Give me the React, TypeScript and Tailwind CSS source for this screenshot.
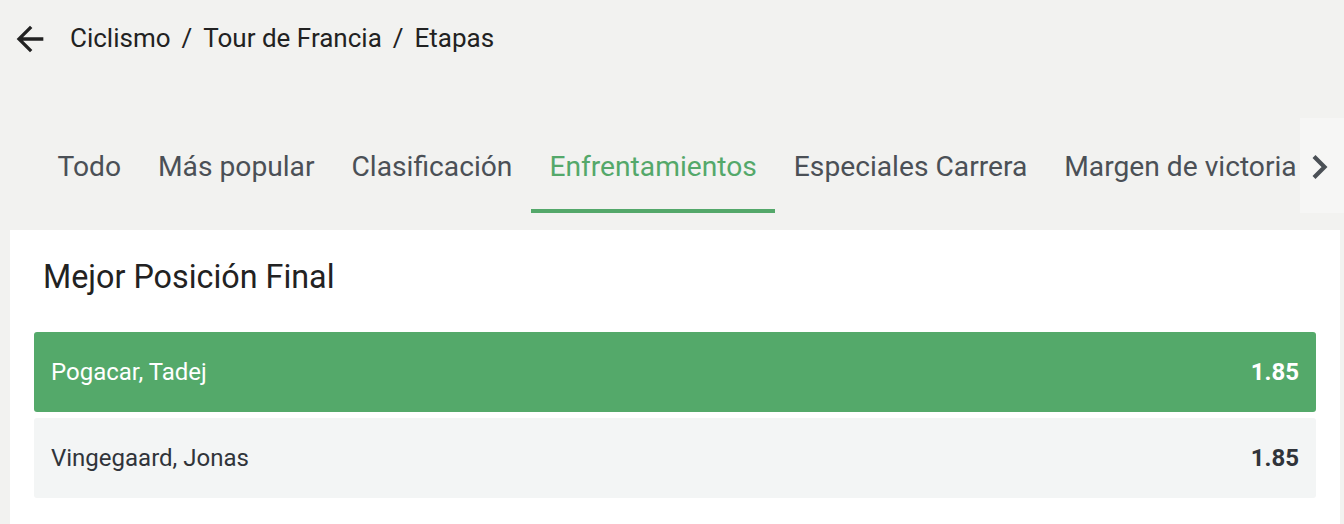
const tabs = [
  "Todo",
  "Más popular",
  "Clasificación",
  "Enfrentamientos",
  "Especiales Carrera",
  "Margen de victoria",
];

const rows = [
  { name: "Pogacar, Tadej", odds: "1.85", selected: true },
  { name: "Vingegaard, Jonas", odds: "1.85", selected: false },
];

export default function App() {
  return (
    <div
      className="min-h-[524px] bg-[#f2f2f0] text-[#222]"
      style={{ fontFamily: "Roboto, 'Liberation Sans', sans-serif" }}
    >
      {/* header */}
      <div className="flex h-[76px] items-center pl-[10px]">
        <svg width="40" height="40" viewBox="0 0 24 24" className="mt-[1px] flex-none">
          <path
            d="M20 11H7.83l5.59-5.59L12 4l-8 8 8 8 1.41-1.41L7.83 13H20v-2z"
            fill="#222"
          />
        </svg>
        <div className="ml-[20px] flex items-center gap-[11px] text-[26px]">
          <span>Ciclismo</span>
          <span>/</span>
          <span>Tour de Francia</span>
          <span>/</span>
          <span>Etapas</span>
        </div>
      </div>

      {/* tabs */}
      <div className="mt-[42px] flex h-[95px]">
        <div className="flex flex-1 overflow-hidden pl-[39px]">
          {tabs.map((tab) => (
            <div
              key={tab}
              className={
                tab === "Enfrentamientos"
                  ? "flex flex-none items-center border-b-4 border-[#54a86a] px-[18.5px] pt-[8px] text-[28.2px] whitespace-nowrap text-[#54a86a]"
                  : "flex flex-none items-center border-b-4 border-transparent px-[18.5px] pt-[8px] text-[28.2px] whitespace-nowrap text-[#4b5056]"
              }
            >
              {tab}
            </div>
          ))}
        </div>
        <div className="flex w-[44px] flex-none items-center bg-[#f6f6f5] pl-[10px] pt-[2px]">
          <svg width="20" height="26" viewBox="0 0 20 26">
            <polyline
              points="4,2.5 14.5,13 4,23.5"
              fill="none"
              stroke="#4b5056"
              strokeWidth="4.2"
            />
          </svg>
        </div>
      </div>

      {/* card */}
      <div className="mt-[17px] ml-[10px] mr-[4px] bg-white px-[24px] pt-[29px] pb-[26px]">
        <div className="pl-[9px] text-[32.3px] leading-[36px] text-[#222]">
          Mejor Posición Final
        </div>
        <div className="mt-[37px] flex flex-col gap-[6px]">
          {rows.map((row) => (
            <div
              key={row.name}
              className={
                row.selected
                  ? "flex h-[80px] items-center justify-between rounded-[3px] bg-[#54a96a] px-[17px] text-[24px] text-white"
                  : "flex h-[80px] items-center justify-between rounded-[3px] bg-[#f3f5f5] px-[17px] text-[24px] text-[#30343a]"
              }
            >
              <span>{row.name}</span>
              <span className="font-bold">{row.odds}</span>
            </div>
          ))}
        </div>
      </div>
    </div>
  );
}
